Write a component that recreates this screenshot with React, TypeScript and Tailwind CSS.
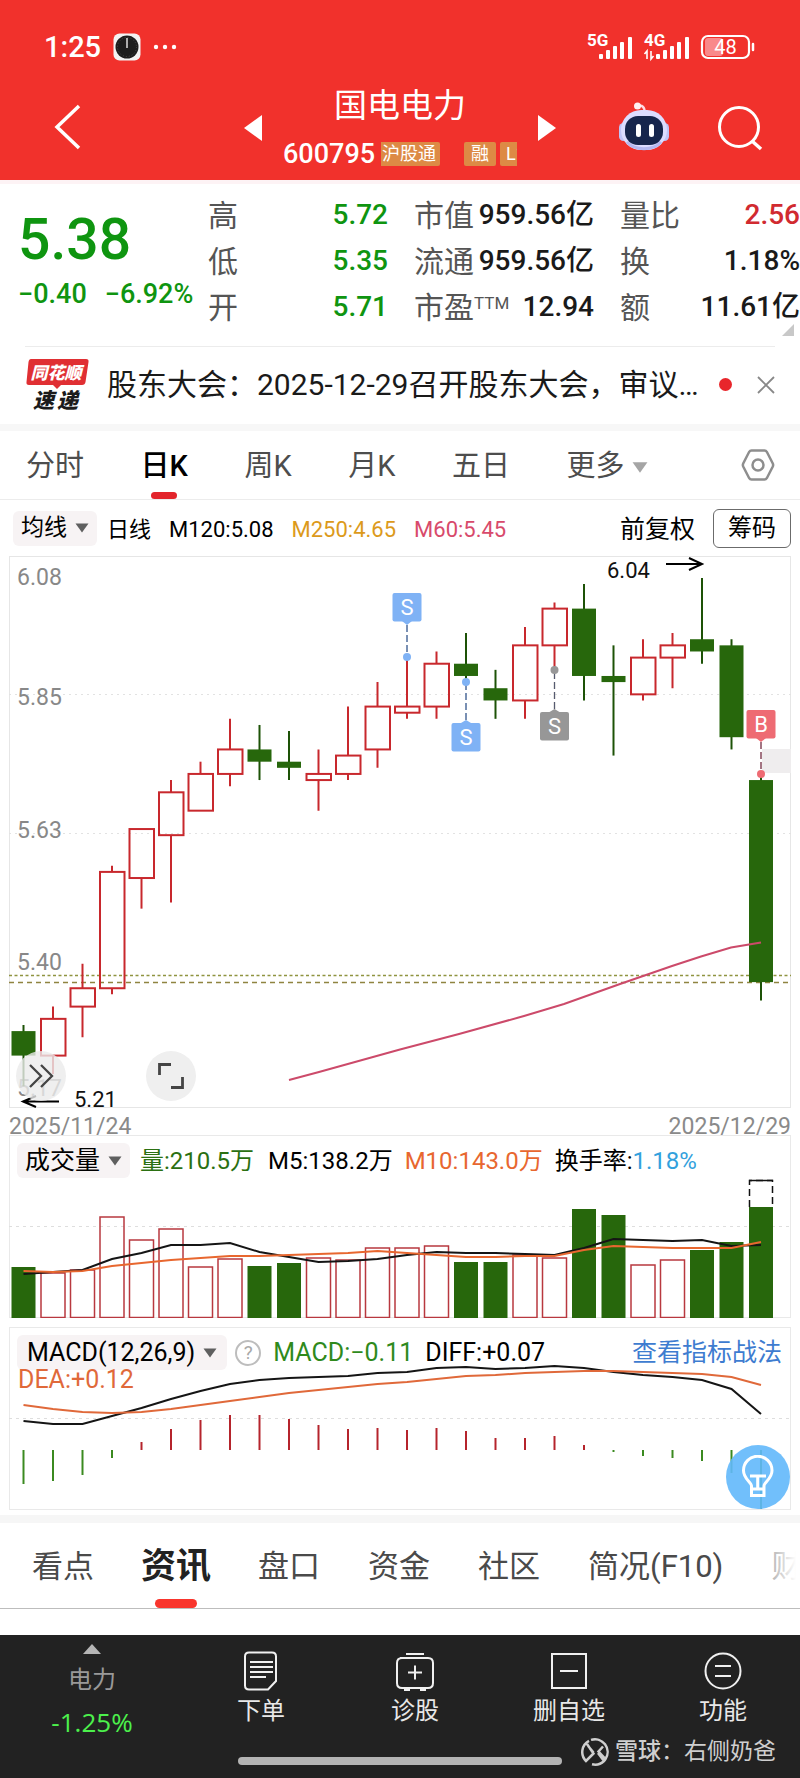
import React, { useState } from 'react';

type Candle = [open: number, close: number, high: number, low: number];

// 日K數據: 開, 收, 高, 低
const candles: Candle[] = [
  [5.3, 5.26, 5.31, 5.21],
  [5.26, 5.32, 5.34, 5.23],
  [5.34, 5.37, 5.41, 5.29],
  [5.37, 5.56, 5.57, 5.36],
  [5.55, 5.63, 5.63, 5.5],
  [5.62, 5.69, 5.71, 5.51],
  [5.66, 5.72, 5.74, 5.66],
  [5.72, 5.76, 5.81, 5.7],
  [5.76, 5.74, 5.8, 5.71],
  [5.74, 5.73, 5.79, 5.71],
  [5.71, 5.72, 5.76, 5.66],
  [5.72, 5.75, 5.83, 5.71],
  [5.76, 5.83, 5.87, 5.73],
  [5.82, 5.83, 5.91, 5.81],
  [5.83, 5.9, 5.92, 5.81],
  [5.9, 5.88, 5.95, 5.87],
  [5.86, 5.84, 5.89, 5.81],
  [5.84, 5.93, 5.96, 5.81],
  [5.93, 5.99, 6.0, 5.89],
  [5.99, 5.88, 6.03, 5.84],
  [5.88, 5.87, 5.93, 5.75],
  [5.85, 5.91, 5.94, 5.84],
  [5.91, 5.93, 5.95, 5.86],
  [5.94, 5.92, 6.04, 5.9],
  [5.93, 5.78, 5.94, 5.76],
  [5.71, 5.38, 5.72, 5.35],
];

const volumeTops = [132, 138, 135, 82, 105, 94, 132, 124, 131, 128, 123, 125, 113, 113, 111, 127, 127, 120, 123, 74, 80, 130, 125, 115, 107, 72];
const volumeM5 = [139, 137, 135, 124, 118, 110, 110, 108, 117, 122, 127, 126, 124, 120, 117, 118, 118, 119, 120, 113, 104, 105, 106, 105, 111, 110];
const volumeM10 = [136, 137, 136, 131, 128, 125, 123, 121, 121, 120, 119, 118, 116, 118, 120, 122, 122, 121, 121, 115, 111, 112, 113, 113, 113, 107];
const macdBars = [157, 154, 148, 131, 115, 102, 93, 88, 88, 92, 98, 102, 101, 103, 101, 104, 111, 111, 109, 118, 125, 129, 131, 134, 146, 182];
const macdDiff = [94, 97, 97, 89, 81, 72, 64, 57, 53, 51, 50, 49, 46, 45, 41, 40, 42, 41, 39, 41, 45, 48, 50, 53, 62, 87];
const macdDea = [78, 82, 85, 86, 85, 82, 78, 74, 70, 66, 63, 60, 57, 55, 52, 49, 48, 46, 45, 44, 44, 45, 46, 47, 50, 58];

const CHART_W = 782;
const UP = '#c8282d';
const DOWN = '#27670c';

const cx = (i: number) => 14.5 + i * 29.5;
const py = (price: number) => 22 + (6.04 - price) * 612.3;
const toPoints = (values: number[]) => values.map((v, i) => `${cx(i)},${v}`).join(' ');

const Caret: React.FC<{ className?: string }> = ({ className }) => (
  <svg viewBox="0 0 14 10" className={className} fill="currentColor">
    <path d="M0.5 0.5h13L7 9.5z" />
  </svg>
);

const Signal: React.FC<{ label: string; arrows?: boolean }> = ({ label, arrows }) => (
  <svg width="49" height="36" viewBox="-1 -5 49 36" fill="#fff">
    <text x="0" y="12" fontSize="17" fontWeight="700">{label}</text>
    {arrows && (
      <g stroke="#fff" strokeWidth="1.6" fill="none">
        <path d="M3 25v-8l-2.500 3M7 17v8l2.500-3" />
      </g>
    )}
    <rect x="12" y="20" width="4" height="5" rx="1" />
    <rect x="19" y="16" width="4" height="9" rx="1" />
    <rect x="26" y="12" width="4" height="13" rx="1" />
    <rect x="33" y="8" width="4" height="17" rx="1" />
    <rect x="41" y="3" width="4" height="22" rx="1" />
  </svg>
);

const StatusBar = () => (
  <div className="flex h-[94px] items-center justify-between pr-[44px] pl-[44px] text-white">
    <div className="flex items-center gap-3">
      <span className="text-[29px] leading-8 font-medium">1:25</span>
      <svg width="28" height="28" viewBox="0 0 28 28">
        <rect x="0.500" y="0.500" width="27" height="27" rx="6" fill="#f3f3f3" />
        <circle cx="14" cy="14" r="11.500" fill="#1d1d1d" />
        <circle cx="14" cy="14" r="9.500" fill="none" stroke="#4a4a4a" strokeDasharray="1 2" />
        <path d="M14 5v10" stroke="#ddd" strokeWidth="1.500" />
      </svg>
      <svg width="24" height="6" viewBox="0 0 24 6" fill="#fff">
        <circle cx="3" cy="3" r="2.200" />
        <circle cx="12" cy="3" r="2.200" />
        <circle cx="21" cy="3" r="2.200" />
      </svg>
    </div>
    <div className="flex items-center gap-2">
      <Signal label="5G" />
      <Signal label="4G" arrows />
      <svg width="56" height="26" viewBox="0 0 56 26">
        <rect x="5" y="4" width="18" height="18" rx="3" fill="#f9898a" />
        <rect x="2" y="2" width="47" height="22" rx="6" fill="none" stroke="#fff" strokeWidth="2.200" />
        <path d="M53 10v6" stroke="#fff" strokeWidth="2.500" strokeLinecap="round" />
        <text x="25.500" y="20" textAnchor="middle" fontSize="20" fill="#fff">48</text>
      </svg>
    </div>
  </div>
);

const Robot = () => (
  <svg width="54" height="50" viewBox="0 0 54 50">
    <path d="M20 5c5-3 8 0 7.500 6" fill="none" stroke="#ffd9e4" strokeWidth="2.500" />
    <circle cx="20.500" cy="4" r="3.500" fill="#fff0f3" />
    <rect x="2" y="21" width="9" height="18" rx="4.500" fill="#bfc3f7" />
    <rect x="43" y="21" width="9" height="18" rx="4.500" fill="#bfc3f7" />
    <rect x="4" y="8" width="46" height="40" rx="20" fill="#dcdcff" />
    <path d="M10 40c8 9 26 9 34 0" fill="none" stroke="#b4b8f0" strokeWidth="3" />
    <rect x="8" y="14" width="38" height="29" rx="13" fill="#16254c" />
    <rect x="19" y="22" width="5" height="13" rx="2.500" fill="#fff" />
    <rect x="32" y="22" width="5" height="13" rx="2.500" fill="#fff" />
  </svg>
);

const Header = () => (
  <header className="bg-[#f1312c] text-white">
    <StatusBar />
    <div className="grid h-[86px] grid-cols-[1fr_312px_1fr]">
      <div className="flex items-start pt-2.5 pl-[52px]">
        <button type="button" aria-label="返回">
          <svg width="32" height="46" viewBox="0 0 32 46" fill="none" stroke="#fff" strokeWidth="3.500">
            <path d="M27 2L5 23l22 21" />
          </svg>
        </button>
      </div>
      <div className="flex justify-between">
        <button type="button" aria-label="上一只" className="mt-[21px] self-start">
          <svg width="18" height="26" viewBox="0 0 18 26" fill="#fff"><path d="M18 0v26L0 13z" /></svg>
        </button>
        <div className="flex w-[234px] flex-col items-center">
          <h1 className="-mt-2 text-[33px] leading-10">国电电力</h1>
          <div className="mt-3 flex w-full items-center">
            <span className="w-[98px] text-[27px] leading-8 font-medium">600795</span>
            <div className="flex flex-1 overflow-hidden text-[18px] leading-6">
              <span className="w-[59px] shrink-0 rounded-r-xs bg-[#dd8a45] pl-px whitespace-nowrap">沪股通</span>
              <span className="ml-6 shrink-0 rounded-xs bg-[#dd8a45] px-[7px]">融</span>
              <span className="ml-1 shrink-0 rounded-xs bg-[#dd8a45] px-1.5">L1</span>
            </div>
          </div>
        </div>
        <button type="button" aria-label="下一只" className="mt-[21px] self-start">
          <svg width="18" height="26" viewBox="0 0 18 26" fill="#fff"><path d="M0 0v26l18-13z" /></svg>
        </button>
      </div>
      <div className="flex items-start justify-end gap-[46px] pt-2 pr-[37px]">
        <button type="button" aria-label="助手"><Robot /></button>
        <button type="button" aria-label="搜索" className="mt-[3px]">
          <svg width="46" height="46" viewBox="0 0 46 46" fill="none" stroke="#fff" strokeWidth="3">
            <circle cx="22" cy="22" r="19.500" />
            <path d="M35 36l9 8" strokeWidth="3.500" />
          </svg>
        </button>
      </div>
    </div>
  </header>
);

interface QuoteRow {
  label: string;
  sup?: string;
  value: string;
  color?: string;
}

const QuoteColumn: React.FC<{ rows: QuoteRow[]; className?: string }> = ({ rows, className }) => (
  <dl className={className}>
    {rows.map((row) => (
      <div key={row.label} className="flex h-[46px] items-center justify-between whitespace-nowrap">
        <dt className="flex text-[30px] text-[#555555]">
          {row.label}
          {row.sup && <sup className="top-0 mt-1.5 text-[17px] leading-6">{row.sup}</sup>}
        </dt>
        <dd className={`text-[28px] font-medium ${row.color ?? 'text-[#1a1a1a]'}`}>{row.value}</dd>
      </div>
    ))}
  </dl>
);

const Quote = () => (
  <section className="relative flex h-[166px] border-t-4 border-[#fdf3f5] pt-2">
    <div className="w-[208px] pl-[18px] text-[#0f9510]">
      <div className="mt-4 text-[57px] leading-[64px] font-medium">5.38</div>
      <div className="mt-1.5 flex gap-[18px] text-[27px] leading-8 font-medium">
        <span>−0.40</span>
        <span>−6.92%</span>
      </div>
    </div>
    <QuoteColumn
      className="w-[180px]"
      rows={[
        { label: '高', value: '5.72', color: 'text-[#0f9510]' },
        { label: '低', value: '5.35', color: 'text-[#0f9510]' },
        { label: '开', value: '5.71', color: 'text-[#0f9510]' },
      ]}
    />
    <QuoteColumn
      className="ml-[26px] w-[180px]"
      rows={[
        { label: '市值', value: '959.56亿' },
        { label: '流通', value: '959.56亿' },
        { label: '市盈', sup: 'TTM', value: '12.94' },
      ]}
    />
    <QuoteColumn
      className="ml-[26px] flex-1"
      rows={[
        { label: '量比', value: '2.56', color: 'text-[#d12a30]' },
        { label: '换', value: '1.18%' },
        { label: '额', value: '11.61亿' },
      ]}
    />
    <svg width="12" height="12" viewBox="0 0 12 12" className="absolute right-1.5 bottom-2.5">
      <path d="M12 0v12H0z" fill="#c8c8c8" />
    </svg>
  </section>
);

const News = () => (
  <section className="mx-[25px] flex h-[78px] items-center border-t border-[#ececec] pb-0.5">
    <svg width="64" height="54" viewBox="0 0 64 54" className="shrink-0">
      <path d="M6 1h55q3 0 2.500 3l-3 20q-.5 3-3.500 3H36l-4 4-4-4H4q-3 0-2.500-3l2-20Q4 1 6 1z" fill="#e02f33" />
      <text x="31" y="21" textAnchor="middle" fontSize="17" fontWeight="900" fontStyle="italic" fill="#fff">同花顺</text>
      <text x="8" y="50" fontSize="21" fontWeight="900" fontStyle="italic" fill="#1b1b1b">速</text>
      <text x="32" y="50" fontSize="21" fontWeight="900" fontStyle="italic" fill="#1b1b1b">递</text>
    </svg>
    <p className="ml-[18px] flex-1 truncate text-[30px] text-[#1a1a1a]">股东大会：2025-12-29召开股东大会，审议…</p>
    <span className="ml-3 size-[13px] rounded-full bg-[#e8262b]" />
    <button type="button" aria-label="关闭" className="ml-[25px]">
      <svg width="18" height="18" viewBox="0 0 18 18" stroke="#888" strokeWidth="1.800">
        <path d="M1 1l16 16M17 1L1 17" />
      </svg>
    </button>
  </section>
);

const periods = ['分时', '日K', '周K', '月K', '五日', '更多'];

const PeriodTabs = () => {
  const [active, setActive] = useState('日K');

  return (
    <nav className="flex h-[69px] items-stretch justify-between border-b border-[#ececec] pr-[25px] pl-[26px] text-[29px] text-[#4d4d4d]">
      {periods.map((p) => (
        <button
          key={p}
          type="button"
          onClick={() => setActive(p)}
          className={`relative flex items-center gap-2 pt-1 ${p === active ? 'font-medium text-black' : ''}`}
        >
          {p}
          {p === '更多' && <Caret className="h-[13px] w-4 text-[#a5a5a5]" />}
          {p === active && <span className="absolute bottom-0 left-1/2 h-[7px] w-[26px] -translate-x-1/2 rounded-full bg-[#e3242b]" />}
        </button>
      ))}
      <button type="button" aria-label="设置" className="ml-9">
        <svg width="34" height="32" viewBox="0 0 34 32" fill="none" stroke="#8e8e8e" strokeWidth="2.500">
          <path d="M10.500 1.500h13q1.500 0 2.300 1.300l6 11.700q.7 1.500 0 3l-6 11.700q-.8 1.300-2.300 1.300h-13q-1.500 0-2.300-1.300l-6-11.700q-.7-1.500 0-3l6-11.700q.8-1.300 2.300-1.300z" />
          <circle cx="17" cy="16" r="5.500" />
        </svg>
      </button>
    </nav>
  );
};

const Chip: React.FC<{ children: React.ReactNode; className?: string }> = ({ children, className = 'px-2.5' }) => (
  <button type="button" className={`flex h-[35px] shrink-0 items-center gap-2 rounded-md bg-[#f7f3f4] text-black ${className}`}>
    {children}
    <Caret className="h-[10px] w-[14px] text-[#5f5f5f]" />
  </button>
);

const Averages = () => (
  <div className="flex h-14 items-center pr-[9px] pl-[13px] text-[22px] whitespace-nowrap text-black">
    <Chip className="px-2"><span className="text-[23px]">均线</span></Chip>
    <div className="mt-[3px] ml-2.5 flex gap-[18px]">
      <span>日线</span>
      <span>M120:5.08</span>
      <span className="text-[#dc9a1b]">M250:4.65</span>
      <span className="text-[#d84a6b]">M60:5.45</span>
    </div>
    <span className="mt-[3px] ml-auto text-[25px]">前复权</span>
    <button type="button" className="ml-[18px] h-[39px] rounded-md border border-[#6b6b6b] px-3.5 text-[24px]">筹码</button>
  </div>
);

interface MarkerProps {
  x: number;
  top: number;
  dot: number;
  color: string;
  label: string;
}

// 買賣點標記, 圓點在K線一側
const Marker: React.FC<MarkerProps> = ({ x, top, dot, color, label }) => {
  const below = top > dot;
  const tip = below ? top - 3 : top + 32;
  const edge = below ? top : top + 28;
  return (
    <g>
      <path d={`M${x} ${tip}V${dot}`} stroke={color} strokeWidth="1.500" strokeDasharray="7 3" />
      <path d={`M${x} ${tip}V${dot}`} stroke="#555a70" strokeWidth="1" strokeDasharray="7 3" />
      <circle cx={x} cy={dot} r="4" fill={color} />
      <rect x={x - 14.5} y={top} width="29" height="28.5" rx="2" fill={color} />
      <path d={`M${x - 5} ${edge}L${x} ${tip}L${x + 5} ${edge}z`} fill={color} />
      <text x={x} y={top + 22} textAnchor="middle" fontSize="22" fill="#fff">{label}</text>
    </g>
  );
};

const axis = [
  { text: '6.08', y: 29 },
  { text: '5.85', y: 149 },
  { text: '5.63', y: 282 },
  { text: '5.40', y: 414 },
  { text: '5.17', y: 540 },
];

const KChart = () => (
  <div className="mx-[9px]">
    <div className="relative border border-[#e6e6e6]">
      <svg viewBox={`0 0 ${CHART_W} 552`} className="-m-px block w-[calc(100%+2px)] max-w-none overflow-visible">
        <g stroke="#e2e2e2" strokeDasharray="2 4">
          <path d={`M0 138.500H${CHART_W}M0 277.500H${CHART_W}`} />
        </g>
        <path d={`M0 419.500H${CHART_W}`} stroke="#8f9440" strokeWidth="1.300" strokeDasharray="3 2.500" />
        <path d={`M0 426.500H${CHART_W}`} stroke="#8f8440" strokeWidth="1.300" strokeDasharray="5 4" />
        <rect x="753" y="193" width="29" height="24" fill="#efedee" />
        <g fontSize="23" fill="#888">
          {axis.map((a) => (
            <text key={a.text} x="8" y={a.y}>{a.text}</text>
          ))}
        </g>
        {candles.map(([open, close, high, low], i) => {
          const up = close > open;
          const top = py(Math.max(open, close));
          const bottom = py(Math.min(open, close));
          const x = cx(i);
          return up ? (
            <g key={i} stroke={UP} strokeWidth="2" fill="none">
              <path d={`M${x} ${py(high)}V${top}M${x} ${bottom}V${py(low)}`} />
              <rect x={x - 12} y={top} width="24.500" height={bottom - top} />
            </g>
          ) : (
            <g key={i} fill={DOWN}>
              <path d={`M${x} ${py(high)}V${py(low)}`} stroke="#1d5207" strokeWidth="2" />
              <rect x={x - 12} y={top} width="24" height={bottom - top} />
            </g>
          );
        })}
        <polyline
          points="280,524 310,516 391,493.500 450,478 515,460 555,448 611,428 663,410 692,400.500 722,391.500 752,386.500"
          fill="none"
          stroke="#cc4a6a"
          strokeWidth="2"
        />
        <Marker x={398} top={37} dot={101} color="#7fb2f5" label="S" />
        <Marker x={457} top={167} dot={126} color="#7fb2f5" label="S" />
        <Marker x={545.5} top={156} dot={114} color="#979797" label="S" />
        <Marker x={752} top={154} dot={218} color="#ee6b73" label="B" />
        <g fill="none" stroke="#000" strokeWidth="2">
          <path d="M657 8h36M680 2l13 6-13 6" />
          <path d="M50 545.500H14M27 540l-13 5.500 13 5.500" />
        </g>
        <g fontSize="22" fill="#111">
          <text x="598" y="22">6.04</text>
          <text x="65" y="551">5.21</text>
        </g>
      </svg>
      <button type="button" aria-label="展开" className="absolute bottom-1.5 left-1.5 flex size-[50px] items-center justify-center rounded-full bg-[#ebebeb]/80">
        <svg width="26" height="26" viewBox="0 0 26 26" fill="none" stroke="#444" strokeWidth="2.300">
          <path d="M2 2l11 11L2 24M13 2l11 11-11 11" />
        </svg>
      </button>
      <button type="button" aria-label="全屏" className="absolute bottom-1.5 left-[136px] flex size-[50px] items-center justify-center rounded-full bg-[#efefef]">
        <svg width="28" height="28" viewBox="0 0 28 28" fill="none" stroke="#444" strokeWidth="2.800">
          <path d="M2.500 13V2.500H14M25.500 15v10.500H14" />
        </svg>
      </button>
    </div>
    <div className="flex h-[27px] items-end justify-between text-[23px] leading-4 text-[#8a8a8a]">
      <span>2025/11/24</span>
      <span>2025/12/29</span>
    </div>
  </div>
);

const VolumeChart = () => (
  <section className="relative mx-[9px] border border-[#e9e9e9]">
    <svg viewBox={`0 0 ${CHART_W} 183`} className="-m-px block w-[calc(100%+2px)] max-w-none">
      <path d={`M0 91.500H${CHART_W}`} stroke="#dedede" strokeDasharray="3 4" />
      {volumeTops.map((top, i) =>
        candles[i][1] > candles[i][0] ? (
          <rect key={i} x={cx(i) - 12} y={top} width="24" height={182.5 - top} fill="none" stroke="#b8383f" strokeWidth="1.500" />
        ) : (
          <rect key={i} x={cx(i) - 12} y={top} width="24" height={183 - top} fill={DOWN} />
        ),
      )}
      <path d="M740.500 72V45.500h23V72" fill="none" stroke="#111" strokeWidth="1.500" strokeDasharray="7 4" />
      <path d="M740 45.500h24" stroke="#111" strokeWidth="1.500" />
      <polyline points={toPoints(volumeM5)} fill="none" stroke="#151515" strokeWidth="2" />
      <polyline points={toPoints(volumeM10)} fill="none" stroke="#e8672f" strokeWidth="2" />
    </svg>
    <div className="absolute inset-x-0 top-[7px] flex h-[35px] items-center pl-[7px] text-[24px] whitespace-nowrap">
      <Chip className="px-2"><span className="text-[25px]">成交量</span></Chip>
      <span className="ml-2.5 text-[#2b7012]">量:210.5万</span>
      <span className="ml-3.5 text-black">M5:138.2万</span>
      <span className="ml-3 text-[#e8672f]">M10:143.0万</span>
      <span className="ml-3 text-black">换手率:</span>
      <span className="text-[#33a1dd]">1.18%</span>
    </div>
  </section>
);

const MacdChart = () => (
  <section className="relative mx-[9px] mt-[9px] border border-[#e9e9e9]">
    <svg viewBox={`0 0 ${CHART_W} 183`} className="-m-px block w-[calc(100%+2px)] max-w-none">
      <path d={`M0 91.500H${CHART_W}`} stroke="#dedede" strokeDasharray="3 4" />
      {macdBars.map((y, i) => (
        <path key={i} d={`M${cx(i)} 123V${y}`} stroke={y < 123 ? '#b5242c' : '#3b8a20'} strokeWidth="2" />
      ))}
      <polyline points={toPoints(macdDiff)} fill="none" stroke="#151515" strokeWidth="2" />
      <polyline points={toPoints(macdDea)} fill="none" stroke="#e0693a" strokeWidth="2" />
    </svg>
    <div className="absolute inset-x-0 top-[7px] flex h-[35px] items-center pr-2 pl-[7px] text-[25px] whitespace-nowrap">
      <Chip>MACD(12,26,9)</Chip>
      <button type="button" aria-label="说明" className="ml-2 size-[26px] shrink-0 rounded-full border-2 border-[#bdbdbd] text-[19px] leading-[22px] text-[#a8a8a8]">?</button>
      <span className="ml-3 text-[#2f8a1c]">MACD:−0.11</span>
      <span className="ml-3 text-black">DIFF:+0.07</span>
      <a href="#tactics" className="ml-auto text-[#3e7cd0]">查看指标战法</a>
    </div>
    <span className="absolute top-[38px] left-2 text-[25px] leading-7 text-[#e0693a]">DEA:+0.12</span>
    <button type="button" aria-label="提示" className="absolute right-0 bottom-0 flex size-16 items-center justify-center rounded-full bg-[#62b8fb]/90">
      <svg width="36" height="44" viewBox="0 0 36 44" fill="none" stroke="#fff" strokeWidth="3">
        <path d="M11.500 31c0-4-8-7-8-15.500a14 14 0 0 1 28.500 0c0 8.500-8 11.500-8 15.500v9.500H11.500zM11.500 34h12.500M10 21h16M17.700 21v12" />
      </svg>
    </button>
  </section>
);

const sections = ['看点', '资讯', '盘口', '资金', '社区', '简况(F10)', '财务'];

const SectionTabs = () => {
  const [active, setActive] = useState('资讯');

  return (
    <nav className="relative flex h-[86px] items-stretch gap-12 overflow-hidden border-b border-[#bdbdbd] pl-8 text-[31px] whitespace-nowrap text-[#4a4a4a]">
      {sections.map((s) => (
        <button
          key={s}
          type="button"
          onClick={() => setActive(s)}
          className={`relative shrink-0 pt-1 ${s === active ? '-mx-px text-[35px] font-bold text-[#222]' : ''}`}
        >
          {s}
          {s === active && <span className="absolute bottom-0 left-1/2 h-[9px] w-[42px] -translate-x-1/2 rounded-full bg-[#f9352d]" />}
        </button>
      ))}
      <div className="pointer-events-none absolute inset-y-0 right-0 w-10 bg-linear-to-r from-white/40 to-white to-90%" />
    </nav>
  );
};

const actions = [
  {
    name: '下单',
    icon: (
      <path d="M7 1.500h23q4 0 4 4V30l-8 8.500H7q-4 0-4-4v-29q0-4 4-4zM8 11h23M8 16h23M8 21h23M8 26h16" />
    ),
  },
  {
    name: '诊股',
    icon: (
      <path d="M10 3h18M4 7h28q5 0 5 5v20q0 5-5 5H6q-5 0-5-5V12q0-5 5-5M8 39h6M24 39h6M12 21.500h14M19 14.500v14" />
    ),
  },
  {
    name: '删自选',
    icon: <path d="M2 3h34v34H2zM10 20h18" />,
  },
  {
    name: '功能',
    icon: (
      <>
        <circle cx="19" cy="20" r="17.500" />
        <path d="M11 15h16M11 25h16" />
      </>
    ),
  },
];

const Footer = () => (
  <footer className="relative grid h-[143px] grid-cols-[184px_repeat(4,1fr)] bg-[#222222] text-[24px] leading-8 text-[#e8e8e8]">
    <button type="button" className="flex flex-col items-center self-start pt-[9px]">
      <svg width="18" height="10" viewBox="0 0 18 10" fill="#b5b5b5"><path d="M9 0l9 10H0z" /></svg>
      <span className="mt-2.5 text-[#999]">电力</span>
      <span className="mt-2.5 font-['Open_Sans',sans-serif] text-[26px] text-[#4cf04c]">-1.25%</span>
    </button>
    {actions.map((a) => (
      <button key={a.name} type="button" className="flex flex-col items-center self-start pt-4">
        <svg width="38" height="41" viewBox="0 0 38 41" fill="none" stroke="#f0f0f0" strokeWidth="2">{a.icon}</svg>
        <span className="mt-[3px]">{a.name}</span>
      </button>
    ))}
    <div className="absolute bottom-[13px] left-[238px] h-2 w-[324px] rounded-full bg-[#b4b4b4]" />
    <div className="absolute right-6 bottom-2.5 flex items-center gap-1.5 text-[23px] text-[#cfcfcf]">
      <svg width="28" height="28" viewBox="0 0 28 28" fill="none" stroke="#cfcfcf" strokeWidth="2.500">
        <path d="M8 2.800A12.700 12.700 0 0 0 5 23L12.500 15.500 6 6M10 1.900A12.700 12.700 0 0 1 24.500 21L17.500 13.500l4.500-5M7.500 8.500l5 6M11 26.300A12.700 12.700 0 0 0 23 23l-6-8" />
      </svg>
      <span><b className="font-medium">雪球</b>：右侧奶爸</span>
    </div>
  </footer>
);

const App: React.FC = () => {
  return (
    <div className="bg-white font-[Roboto,'Noto_Sans_CJK_SC',sans-serif]">
      <Header />
      <Quote />
      <News />
      <div className="h-[7px] bg-[#f7f7f7]" />
      <PeriodTabs />
      <Averages />
      <KChart />
      <VolumeChart />
      <MacdChart />
      <div className="mt-[5px] h-2 bg-[#f6f6f6]" />
      <SectionTabs />
      <div className="h-[26px]" />
      <Footer />
    </div>
  );
};

export default App;
